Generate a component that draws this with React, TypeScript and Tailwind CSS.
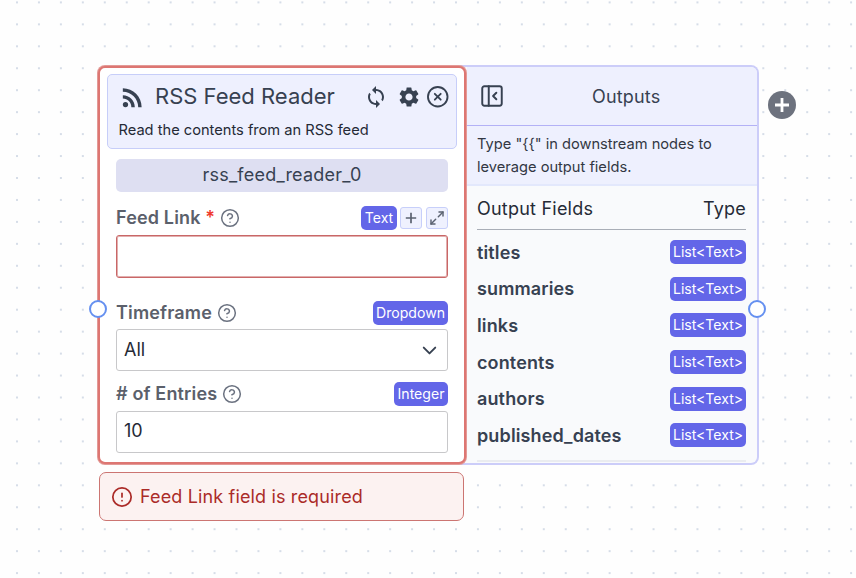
import clsx from "clsx";
import { ChevronDown, CircleAlert, CircleHelp, CircleX, Maximize2, PanelLeftClose } from "lucide-react";
import { ReactNode } from "react";
import { MdRssFeed, MdSettings, MdSync } from "react-icons/md";

const outputs = ["titles", "summaries", "links", "contents", "authors", "published_dates"];

const TypeBadge = ({ children, className }: { children: ReactNode; className?: string }) => (
  <span
    className={clsx(
      "flex h-6 items-center justify-center rounded-[5px] bg-[#6366e8] pb-px text-[14.1px] whitespace-nowrap text-white",
      className
    )}
  >
    {children}
  </span>
);

const FieldLabel = ({ label, required }: { label: string; required?: boolean }) => (
  <div className="flex items-center gap-[5px] text-[18px] font-[560] tracking-[0.15px] text-[#5b606b]">
    <span className="pb-px">
      {label}
      {required && <span className="text-[#ef3a2d]"> *</span>}
    </span>
    <CircleHelp className="size-5 shrink-0 text-[#6b7280]" strokeWidth={1.8} />
  </div>
);

const DotGrid = () => (
  <svg className="absolute inset-0 size-full">
    <pattern id="dots" x="16" y="1.4" width="21.95" height="21.95" patternUnits="userSpaceOnUse">
      <rect width="2" height="2" fill="#d6dde8" />
    </pattern>
    <rect width="100%" height="100%" fill="url(#dots)" />
  </svg>
);

const Handle = ({ className }: { className: string }) => (
  <span className={clsx("absolute size-[18px] rounded-full border-2 border-[#6590f0] bg-white", className)} />
);

const NodeHeader = () => (
  <div className="h-[75px] rounded-[5px] border border-[#c7cef9] bg-[#eef0fe]">
    <div className="flex h-[43px] items-center pl-[10px] text-[#374151]">
      <MdRssFeed className="mt-[2px] size-[29px] shrink-0" />
      <span className="ml-2 w-[199px] text-[22px] whitespace-nowrap">RSS Feed Reader</span>
      <div className="ml-[10px] flex shrink-0 items-center">
        <MdSync className="size-6" />
        <MdSettings className="ml-[9px] size-6" />
        <CircleX className="ml-[5px] size-[23.5px]" strokeWidth={1.9} />
      </div>
    </div>
    <p className="pl-[10.5px] text-[14.65px] leading-6 text-[#252a36]">Read the contents from an RSS feed</p>
  </div>
);

const NodeCard = () => (
  <div className="relative z-10 m-px h-[398px] w-[368px] rounded-[7px] border-2 border-[#dd7672] bg-white px-[7px] pt-[6px] ring-1 ring-[#e39a97]">
    <NodeHeader />
    <div className="px-[9px]">
      <div className="mt-[10px] flex h-[33px] items-center justify-center rounded-[5px] bg-[#dedff2] pb-[2px] text-[18px] tracking-[0.22px] text-[#374151]">
        rss_feed_reader_0
      </div>

      <div className="mt-[13px] flex h-[26px] items-center justify-between">
        <FieldLabel label="Feed Link" required />
        <div className="flex items-center gap-[3px]">
          <TypeBadge className="w-9">Text</TypeBadge>
          <button className="flex size-[22px] items-center justify-center rounded-[3px] border border-[#c7cffa] bg-[#eff1fe]">
            <svg className="size-3" viewBox="0 0 12 12" stroke="#5b6270" strokeWidth="1.7">
              <path d="M6 .8v10.4M.8 6h10.4" />
            </svg>
          </button>
          <button className="ml-px flex size-[22px] items-center justify-center rounded-[3px] border border-[#c7cffa] bg-[#eff1fe]">
            <Maximize2 className="size-4 text-[#5b6270]" strokeWidth={2.2} />
          </button>
        </div>
      </div>
      <div className="mt-1 h-[43px] rounded-[3px] border border-[#c96767] bg-white inset-ring-1 inset-ring-[#e2afaf]" />

      <div className="mt-[22px] flex h-[26px] items-center justify-between">
        <FieldLabel label="Timeframe" />
        <TypeBadge className="w-[75px]">Dropdown</TypeBadge>
      </div>
      <div className="mt-[3px] flex h-[42px] items-center justify-between rounded-[3px] border border-[#c8c8ca] bg-white pr-[6px] pb-px pl-[7px] text-[18px] text-[#252a36]">
        <span>All</span>
        <ChevronDown className="mt-[2px] size-[23px] text-[#374151]" strokeWidth={2} />
      </div>

      <div className="mt-[10px] flex h-[26px] items-center justify-between">
        <FieldLabel label="# of Entries" />
        <TypeBadge className="w-[54px]">Integer</TypeBadge>
      </div>
      <div className="mt-1 flex h-[42px] items-center rounded-[3px] border border-[#c8c8ca] bg-white pb-[3px] pl-[7px] text-[18px] text-[#252a36]">
        10
      </div>
    </div>
  </div>
);

const OutputsPanel = () => (
  <div className="-ml-2 h-[400px] w-[300px] overflow-hidden rounded-r-lg border-2 border-l-0 border-[#cccdf9] bg-[#f9fafc] pl-2">
    <div className="flex h-[59px] items-center border-b border-[#b3b1f6] bg-[#eef0fe]">
      <PanelLeftClose className="ml-3 size-[26px] shrink-0 text-[#374151]" strokeWidth={1.8} />
      <span className="ml-[87px] text-[18px] tracking-[0.17px] text-[#374151]">Outputs</span>
    </div>
    <p className="h-[60px] border-b-2 border-[#e3e8fc] bg-[#eef0fe] pt-[7px] pl-[10px] text-[14.65px] leading-[23px] text-[#323743]">
      Type "{"{{"}" in downstream nodes to
      <br />
      leverage output fields.
    </p>
    <div className="mr-[11px] ml-[10px]">
      <div className="flex h-[44px] items-center justify-between border-b border-[#a9aeb7] pt-[2px] text-[18px] tracking-[0.22px] text-[#252a36]">
        <span>Output Fields</span>
        <span>Type</span>
      </div>
      <div className="pt-1">
        {outputs.map((name) => (
          <div
            key={name}
            className="flex h-[36.6px] items-center justify-between text-[18px] font-semibold tracking-[0.13px] text-[#374151]"
          >
            <span>{name}</span>
            <TypeBadge className="w-[76px] font-normal tracking-normal">{"List<Text>"}</TypeBadge>
          </div>
        ))}
      </div>
      <div className="mt-[6px] h-[2px] bg-[#eaecf0]" />
    </div>
  </div>
);

export default function App() {
  return (
    <div className="relative h-[578px] w-[856px] overflow-hidden bg-[#fefefe] pt-[65px] pl-[97px] font-['Inter',sans-serif]">
      <DotGrid />
      <div className="relative flex">
        <NodeCard />
        <OutputsPanel />
        <Handle className="top-[235.4px] left-[-7.8px] z-20" />
        <Handle className="top-[235.4px] left-[651.3px] z-20" />
        <button className="absolute top-[26px] left-[671px] flex size-[28px] items-center justify-center rounded-full bg-[#6d727e]">
          <svg className="size-[14px]" viewBox="0 0 14 14" stroke="white" strokeWidth="2.8">
            <path d="M7 0v14M0 7h14" />
          </svg>
        </button>
      </div>
      <div className="relative mt-[7px] ml-[2px] flex h-[49px] w-[365px] items-center rounded-[7px] border border-[#cc7572] bg-[#fcf2f1] pl-[11px] text-[18px] tracking-[0.15px] text-[#ab2b28]">
        <CircleAlert className="mr-[7px] size-[22px]" strokeWidth={1.9} />
        Feed Link field is required
      </div>
    </div>
  );
}
